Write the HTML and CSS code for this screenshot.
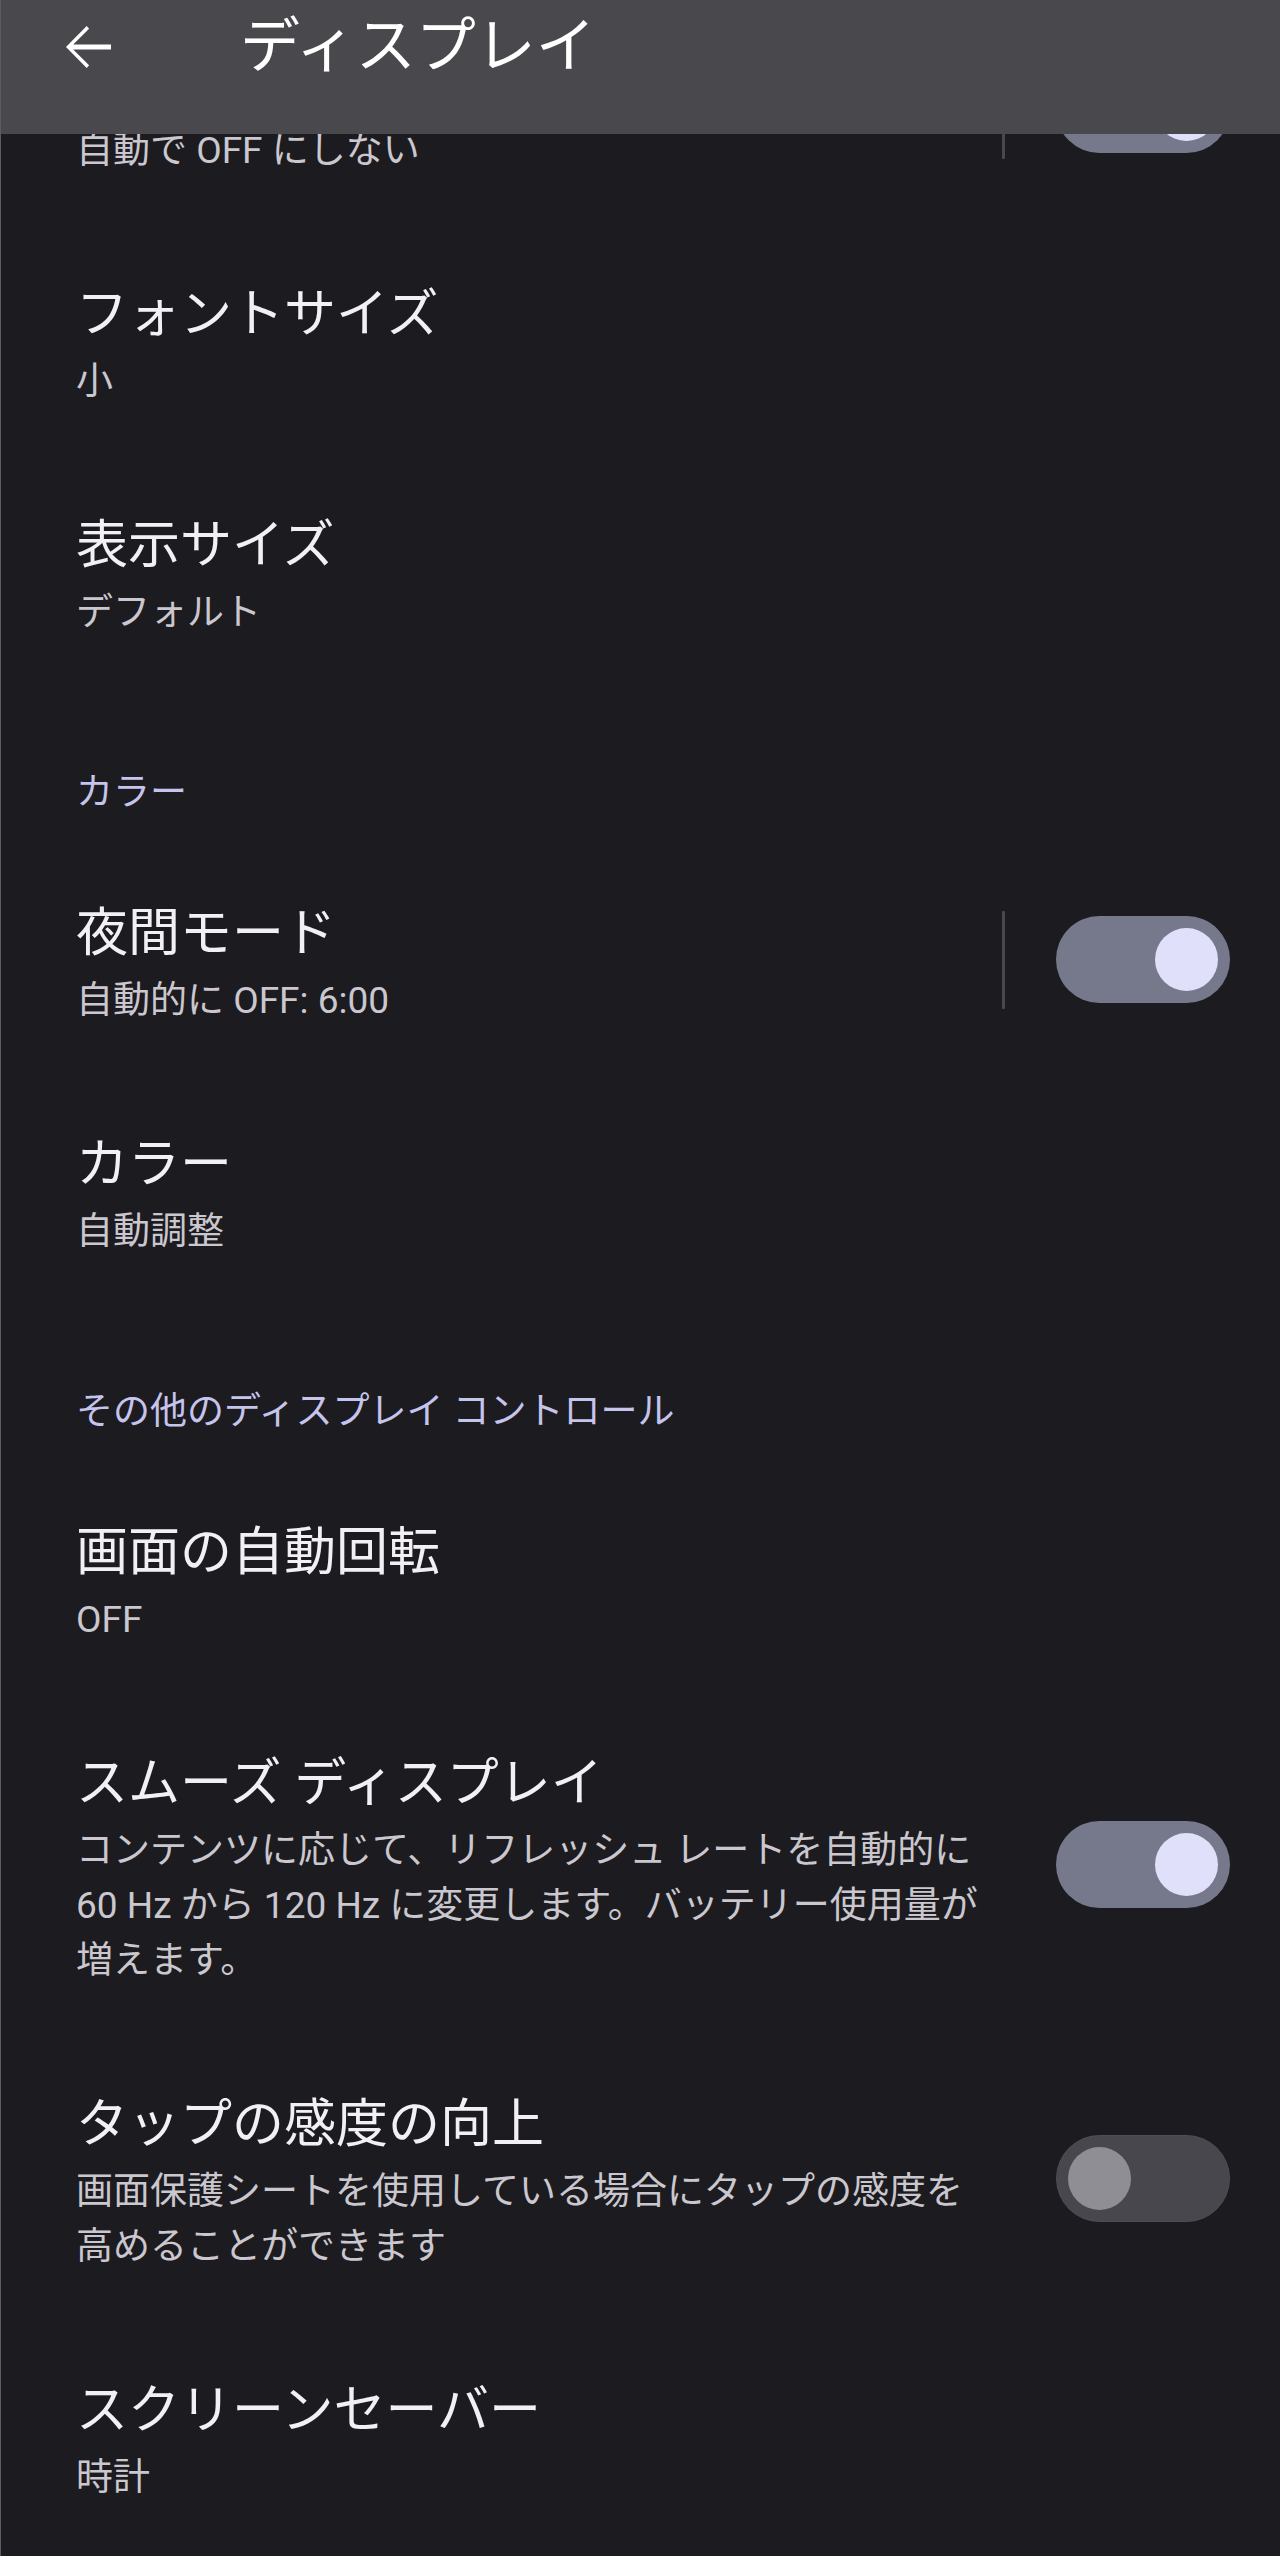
FILE: index.html
```html
<!DOCTYPE html>
<html lang="ja">
<head>
<meta charset="utf-8">
<title>ディスプレイ</title>
<link rel="stylesheet" href="styles.css">
</head>
<body>
<div class="screen">
  <header class="appbar">
    <div class="appbar-row">
      <span class="back" aria-label="戻る">
        <svg viewBox="0 0 24 24" width="72" height="72"><path fill="#ffffff" d="M20 11.2H7.4l5.3-5.3L11.9 5 5 12l6.9 7 .8-.9-5.3-5.3H20z"/></svg>
      </span>
      <h1 class="appbar-title">ディスプレイ</h1>
    </div>
  </header>

  <main class="list">
    <div class="row row-first">
      <div class="text">
        <div class="title title-hidden" aria-hidden="true"></div>
        <div class="summary">自動で OFF にしない</div>
      </div>
      <div class="widget">
        <span class="divider"></span>
        <span class="switch on"><span class="thumb"></span></span>
      </div>
    </div>

    <div class="row">
      <div class="text">
        <div class="title">フォントサイズ</div>
        <div class="summary">小</div>
      </div>
    </div>

    <div class="row">
      <div class="text">
        <div class="title">表示サイズ</div>
        <div class="summary">デフォルト</div>
      </div>
    </div>

    <div class="category">カラー</div>

    <div class="row">
      <div class="text">
        <div class="title">夜間モード</div>
        <div class="summary">自動的に OFF: 6:00</div>
      </div>
      <div class="widget">
        <span class="divider"></span>
        <span class="switch on"><span class="thumb"></span></span>
      </div>
    </div>

    <div class="row">
      <div class="text">
        <div class="title">カラー</div>
        <div class="summary">自動調整</div>
      </div>
    </div>

    <div class="category">その他のディスプレイ コントロール</div>

    <div class="row">
      <div class="text">
        <div class="title">画面の自動回転</div>
        <div class="summary">OFF</div>
      </div>
    </div>

    <div class="row">
      <div class="text">
        <div class="title">スムーズ ディスプレイ</div>
        <div class="summary">コンテンツに応じて、リフレッシュ レートを自動的に 60 Hz から 120 Hz に変更します。バッテリー使用量が増えます。</div>
      </div>
      <div class="widget">
        <span class="switch on"><span class="thumb"></span></span>
      </div>
    </div>

    <div class="row">
      <div class="text">
        <div class="title">タップの感度の向上</div>
        <div class="summary">画面保護シートを使用している場合にタップの感度を高めることができます</div>
      </div>
      <div class="widget">
        <span class="switch off"><span class="thumb"></span></span>
      </div>
    </div>

    <div class="row">
      <div class="text">
        <div class="title">スクリーンセーバー</div>
        <div class="summary">時計</div>
      </div>
    </div>
  </main>
</div>
</body>
</html>
```

FILE: styles.css
```css
html, body {
  margin: 0;
  padding: 0;
  background: #1c1b20;
}

body {
  font-family: Roboto, "Noto Sans CJK JP", sans-serif;
  color: #f2f0f4;
}

.screen {
  position: relative;
  width: 1280px;
  min-height: 2556px;
  overflow: hidden;
  box-sizing: border-box;
  border-left: 1px solid #5c5b60;
  background: #1c1b20;
}

/* App bar (overlays scrolled content) */
.appbar {
  position: absolute;
  top: 0;
  left: 0;
  right: 0;
  height: 134px;
  background: #49484d;
  z-index: 2;
}

.appbar-row {
  height: 94px;
  display: flex;
  align-items: center;
  padding-left: 50px;
}

.back {
  display: flex;
  width: 72px;
  height: 72px;
}

.appbar-title {
  margin: 0 0 0 117px;
  font-size: 60px;
  line-height: 1;
  font-weight: 400;
  color: #ffffff;
}

/* List */
.list {
  display: flex;
  flex-direction: column;
}

.row {
  display: flex;
  align-items: center;
  padding: 51px 50px 47px 75px;
}

.row-first {
  margin-top: -6px;
}

.text {
  flex: 1;
  min-width: 0;
}

.title {
  font-size: 52px;
  line-height: 78px;
  color: #f2f0f4;
}

.title-hidden {
  height: 78px;
}

.summary {
  font-size: 37px;
  line-height: 55px;
  color: #cac7ce;
}

.text:not(:last-child) {
  max-width: 915px;
}

.widget {
  width: 242px;
  flex: none;
  display: flex;
  justify-content: flex-end;
  align-items: center;
  margin-top: -4px;
}

.divider {
  width: 3px;
  height: 98px;
  background: #49484e;
  margin-right: 51px;
  border-radius: 1px;
}

.switch {
  position: relative;
  width: 174px;
  height: 87px;
  border-radius: 44px;
  box-sizing: border-box;
  display: flex;
  align-items: center;
  padding: 0 12px;
}

.switch .thumb {
  width: 63px;
  height: 63px;
  border-radius: 50%;
}

.switch.on {
  background: #76798c;
  justify-content: flex-end;
}

.switch.on .thumb {
  background: #e0e0fa;
}

.switch.off {
  background: #48474d;
  border: 1px solid #4f4e54;
  padding: 0 11px;
  justify-content: flex-start;
}

.switch.off .thumb {
  background: #8f8e94;
}

/* Category header */
.category {
  padding: 78px 50px 24px 75px;
  font-size: 37px;
  line-height: 55px;
  color: #c5c4ec;
}
```
